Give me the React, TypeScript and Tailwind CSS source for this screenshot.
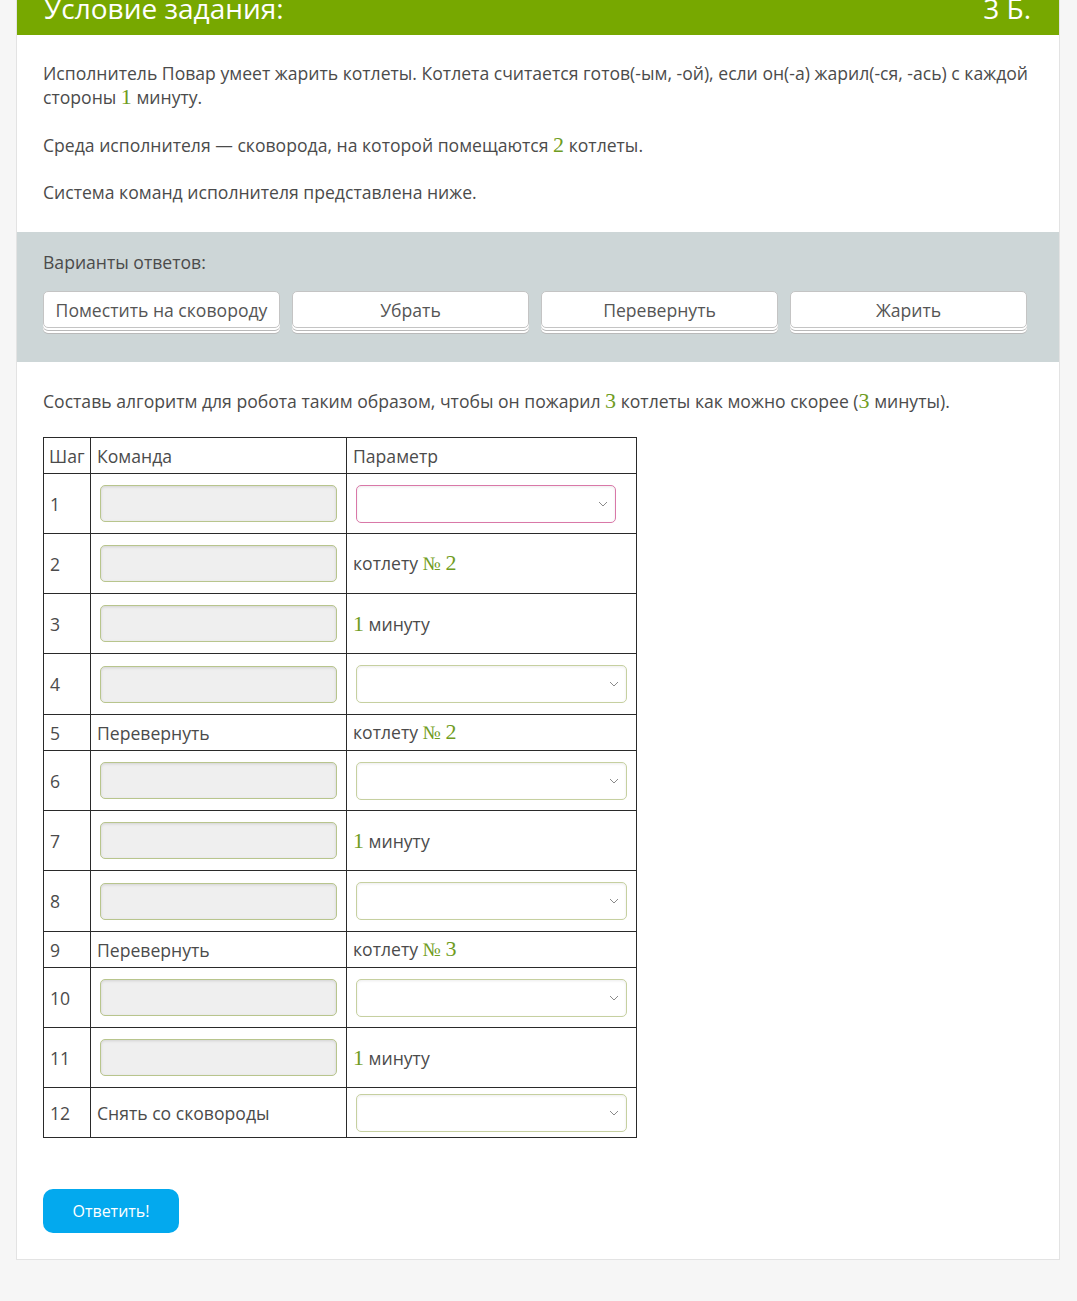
import React from "react";

const Num = ({ children }: { children: React.ReactNode }) => (
  <span className="text-[#6f9c22] text-[22px] leading-[20px]" style={{ fontFamily: '"Liberation Serif", "DejaVu Serif", serif' }}>
    {children}
  </span>
);

const Chevron = () => (
  <svg width="10" height="6" viewBox="0 0 10 6" className="absolute right-[7px] top-1/2 -translate-y-1/2">
    <path d="M1 1 L5 5 L9 1" fill="none" stroke="#8a8a8a" strokeWidth="1" />
  </svg>
);

const CmdInput = () => (
  <div className="h-[37px] w-[237px] rounded-[5px] border border-[#b8c58d] bg-[#efefef] shadow-[inset_0_1px_3px_rgba(0,0,0,0.12)]" />
);

const Select = ({ pink = false }: { pink?: boolean }) => (
  <div
    className={
      pink
        ? "relative h-[38px] w-[260px] rounded-[5px] border border-[#d978a8] bg-white shadow-[inset_0_1px_3px_rgba(0,0,0,0.08)]"
        : "relative h-[38px] w-[271px] rounded-[5px] border border-[#c6d0a0] bg-white shadow-[inset_0_1px_3px_rgba(0,0,0,0.08)]"
    }
  >
    <Chevron />
  </div>
);

type Cell = { kind: "input" } | { kind: "select"; pink?: boolean } | { kind: "text"; node: React.ReactNode };

const kot = (n: string) => (
  <span>
    котлету <span className="text-[#6f9c22] text-[19px]" style={{ fontFamily: '"Liberation Serif", "DejaVu Serif", serif' }}>№ </span>
    <Num>{n}</Num>
  </span>
);
const min = (
  <span>
    <Num>1</Num> минуту
  </span>
);

const rows: { h: string; cmd: Cell; par: Cell }[] = [
  { h: "h-[60px]", cmd: { kind: "input" }, par: { kind: "select", pink: true } },
  { h: "h-[60px]", cmd: { kind: "input" }, par: { kind: "text", node: kot("2") } },
  { h: "h-[60px]", cmd: { kind: "input" }, par: { kind: "text", node: min } },
  { h: "h-[61px]", cmd: { kind: "input" }, par: { kind: "select" } },
  { h: "h-[36px]", cmd: { kind: "text", node: "Перевернуть" }, par: { kind: "text", node: kot("2") } },
  { h: "h-[60px]", cmd: { kind: "input" }, par: { kind: "select" } },
  { h: "h-[60px]", cmd: { kind: "input" }, par: { kind: "text", node: min } },
  { h: "h-[61px]", cmd: { kind: "input" }, par: { kind: "select" } },
  { h: "h-[36px]", cmd: { kind: "text", node: "Перевернуть" }, par: { kind: "text", node: kot("3") } },
  { h: "h-[60px]", cmd: { kind: "input" }, par: { kind: "select" } },
  { h: "h-[60px]", cmd: { kind: "input" }, par: { kind: "text", node: min } },
  { h: "h-[50px]", cmd: { kind: "text", node: "Снять со сковороды" }, par: { kind: "select" } },
];

const renderCell = (c: Cell) => {
  if (c.kind === "input")
    return (
      <td className="border border-[#2a2a2a] px-[9px] align-middle">
        <CmdInput />
      </td>
    );
  if (c.kind === "select")
    return (
      <td className="border border-[#2a2a2a] px-[9px] align-middle">
        <Select pink={c.pink} />
      </td>
    );
  return <td className="border border-[#2a2a2a] px-[6px] align-middle">{c.node}</td>;
};

const options = ["Поместить на сковороду", "Убрать", "Перевернуть", "Жарить"];

export default function App() {
  return (
    <div
      className="min-h-[1301px] bg-[#f6f6f6] text-[#4b4b4b]"
      style={{ fontFamily: '"Open Sans", "Noto Sans", sans-serif' }}
    >
      <div className="ml-[16px] w-[1044px] border border-t-0 border-[#e3e3e3] bg-white">
        <div className="flex h-[35px] items-start justify-between overflow-hidden bg-[#77a800] pl-[27px] pr-[28px] text-white">
          <div className="-mt-[6px] text-[28px] leading-[28px]">Условие задания:</div>
          <div className="-mt-[6px] text-[28px] leading-[28px]">3 Б.</div>
        </div>

        <div className="px-[26px] pt-[26px] pb-[28px] text-[17.6px] leading-[24px]">
          <p>
            Исполнитель Повар умеет жарить котлеты. Котлета считается готов(-ым, -ой), если он(-а) жарил(-ся, -ась) с каждой
            стороны <Num>1</Num> минуту.
          </p>
          <p className="mt-[24px]">
            Среда исполнителя — сковорода, на которой помещаются <Num>2</Num> котлеты.
          </p>
          <p className="mt-[23px]">Система команд исполнителя представлена ниже.</p>
        </div>

        <div className="bg-[#cdd6d7] px-[26px] pt-[18px] pb-[34px] text-[17.6px] leading-[24px]">
          <div>Варианты ответов:</div>
          <div className="mt-[17px] flex gap-[12px]">
            {options.map((o) => (
              <div
                key={o}
                className="flex h-[37px] w-[237px] items-center justify-center rounded-[5px] border border-[#c4c4c4] bg-white text-[#555] shadow-[0_2px_0_0_#fff,0_3px_0_0_#b9b9b9,0_5px_0_0_#fff,0_6px_0_0_#b9b9b9]"
              >
                {o}
              </div>
            ))}
          </div>
        </div>

        <div className="px-[26px] pt-[27px] pb-[26px] text-[17.6px] leading-[24px]">
          <p>
            Составь алгоритм для робота таким образом, чтобы он пожарил <Num>3</Num> котлеты как можно скорее (<Num>3</Num> минуты).
          </p>

          <table className="mt-[24px] w-[593px] table-fixed border-collapse">
            <colgroup>
              <col className="w-[47px]" />
              <col className="w-[256px]" />
              <col className="w-[290px]" />
            </colgroup>
            <thead>
              <tr className="h-[36px]">
                <td className="border border-[#2a2a2a] px-[5px] align-middle">Шаг</td>
                <td className="border border-[#2a2a2a] px-[6px] align-middle">Команда</td>
                <td className="border border-[#2a2a2a] px-[6px] align-middle">Параметр</td>
              </tr>
            </thead>
            <tbody>
              {rows.map((r, i) => (
                <tr key={i} className={r.h}>
                  <td className="border border-[#2a2a2a] px-[6px] align-middle">{i + 1}</td>
                  {renderCell(r.cmd)}
                  {renderCell(r.par)}
                </tr>
              ))}
            </tbody>
          </table>

          <button className="mt-[51px] flex h-[44px] w-[136px] items-center justify-center rounded-[10px] bg-[#03a9ee] text-[16px] text-white">
            Ответить!
          </button>
        </div>
      </div>
    </div>
  );
}
